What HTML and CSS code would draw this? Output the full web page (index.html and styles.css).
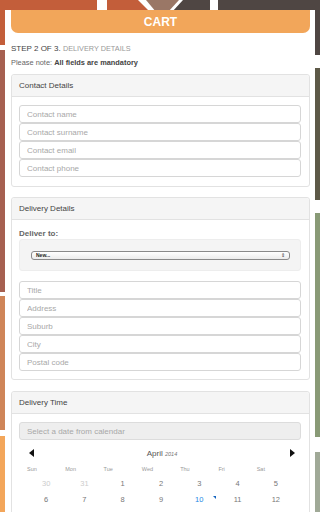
FILE: index.html
```html
<!DOCTYPE html>
<html>
<head>
<meta charset="utf-8">
<link rel="stylesheet" href="styles.css">
</head>
<body>
<svg class="backdrop" width="320" height="512" viewBox="0 0 320 512" aria-hidden="true">
  <rect x="0" y="0" width="97" height="45" fill="#c35e3a"/>
  <polygon points="107,0 138,0 150,12 107,12" fill="#c35e3a"/>
  <polygon points="146,0 179,0 168,12 156,12" fill="#9a7766"/>
  <polygon points="183,0 210,0 210,12 172,12" fill="#4f4643"/>
  <rect x="218" y="0" width="102" height="55" fill="#4f4643"/>
  <rect x="0" y="50" width="60" height="242" fill="#a66050"/>
  <rect x="0" y="296" width="60" height="134" fill="#cf8558"/>
  <rect x="0" y="436" width="60" height="76" fill="#f3a65a"/>
  <rect x="260" y="68" width="60" height="132" fill="#5d5948"/>
  <rect x="260" y="213" width="60" height="224" fill="#899a76"/>
  <rect x="260" y="452" width="60" height="60" fill="#a0a997"/>
</svg>

<main class="card">
  <header class="cart-header">CART</header>
  <p class="step">STEP 2 OF 3. <span class="step-sub">DELIVERY DETAILS</span></p>
  <p class="note">Please note: <b>All fields are mandatory</b></p>

  <section class="panel">
    <div class="panel-heading">Contact Details</div>
    <div class="panel-body">
      <input class="field" placeholder="Contact name">
      <input class="field" placeholder="Contact surname">
      <input class="field" placeholder="Contact email">
      <input class="field" placeholder="Contact phone">
    </div>
  </section>

  <section class="panel panel-delivery">
    <div class="panel-heading">Delivery Details</div>
    <div class="panel-body">
      <div class="label">Deliver to:</div>
      <div class="well">
        <div class="select"><span>New...</span><span class="select-arrow">&#8661;</span></div>
      </div>
      <div class="fields">
        <input class="field" placeholder="Title">
        <input class="field" placeholder="Address">
        <input class="field" placeholder="Suburb">
        <input class="field" placeholder="City">
        <input class="field" placeholder="Postal code">
      </div>
    </div>
  </section>

  <section class="panel panel-time">
    <div class="panel-heading">Delivery Time</div>
    <div class="panel-body">
      <input class="field field-readonly" placeholder="Select a date from calendar" readonly>
      <div class="calendar">
        <div class="cal-head">
          <span class="arrow arrow-left"></span>
          <span class="cal-title">April <i>2014</i></span>
          <span class="arrow arrow-right"></span>
        </div>
        <div class="cal-grid cal-days">
          <span>Sun</span><span>Mon</span><span>Tue</span><span>Wed</span><span>Thu</span><span>Fri</span><span>Sat</span>
        </div>
        <div class="cal-grid cal-dates">
          <span class="muted">30</span><span class="muted">31</span><span>1</span><span>2</span><span>3</span><span>4</span><span>5</span>
          <span>6</span><span>7</span><span>8</span><span>9</span><span class="today">10</span><span>11</span><span>12</span>
          <span>13</span><span>14</span><span>15</span><span>16</span><span>17</span><span>18</span><span>19</span>
        </div>
      </div>
    </div>
  </section>
</main>
</body>
</html>
```
FILE: styles.css
```css
* { box-sizing: border-box; }
html, body {
  margin: 0;
  padding: 0;
  width: 320px;
  height: 512px;
  overflow: hidden;
  background: #ffffff;
  font-family: "Liberation Sans", Arial, sans-serif;
  color: #444;
}
body { position: relative; }
.backdrop {
  position: absolute;
  left: 0;
  top: 0;
  z-index: 0;
}
.card {
  position: relative;
  z-index: 1;
  margin: 10px 5px 0 5px;
  padding: 0 5px 0 6px;
  background: #fff;
  min-height: 600px;
}
.cart-header {
  height: 23px;
  line-height: 24px;
  background: #f2a65a;
  border-radius: 0 0 7px 7px;
  color: #fff;
  font-weight: bold;
  font-size: 12px;
  text-align: center;
}
.step {
  margin: 10px 0 0 0;
  font-size: 8px;
  line-height: 12px;
  color: #444;
}
.step-sub {
  font-size: 7.3px;
  color: #999;
}
.note {
  margin: 3px 0 0 0;
  font-size: 7.4px;
  line-height: 10px;
  color: #666;
}
.note b { color: #444; }

.panel {
  margin-top: 6px;
  border: 1px solid #e2e2e2;
  border-radius: 3px;
  background: #fff;
}
.panel-delivery { margin-top: 10px; }
.panel-time { margin-top: 11px; }
.panel-heading {
  height: 22px;
  line-height: 22px;
  padding-left: 7px;
  background: #f5f5f5;
  border-bottom: 1px solid #e2e2e2;
  font-size: 8px;
  color: #444;
  border-radius: 3px 3px 0 0;
}
.panel-body {
  padding: 8px 8px 9px 7px;
}
.panel-delivery .panel-body { padding: 9px 8px 8px 7px; }

.field {
  display: block;
  width: 100%;
  height: 18px;
  margin: 0;
  padding: 0 7px;
  border: 1px solid #d6d6d6;
  border-radius: 3px;
  background: #fff;
  font-family: "Liberation Sans", Arial, sans-serif;
  font-size: 8px;
  color: #555;
  outline: none;
}
.field::placeholder { color: #a8a8a8; }
.field-readonly {
  background: #eeeeee;
  border-color: #dcdcdc;
}

.label {
  font-size: 8px;
  line-height: 10px;
  font-weight: bold;
  color: #666;
}
.well {
  height: 32px;
  padding: 12px 10px 0 11px;
  background: #f4f4f4;
  border: 1px solid #ededed;
  border-radius: 3px;
}
.select {
  display: flex;
  align-items: center;
  justify-content: space-between;
  height: 9px;
  padding: 0 4px 0 4px;
  margin-top: -1px;
  border: 1px solid #8a8a8a;
  border-radius: 3px;
  background: linear-gradient(#ffffff, #ececec);
  font-size: 5px;
  font-weight: bold;
  color: #222;
  line-height: 7px;
}
.select-arrow {
  font-size: 5px;
  font-weight: normal;
  color: #333;
}
.fields { margin-top: 10px; }

.calendar {
  margin: 4px 6px 0 8px;
}
.cal-head {
  display: flex;
  align-items: center;
  justify-content: space-between;
  height: 18px;
  padding: 0 0 0 2px;
}
.arrow {
  width: 0;
  height: 0;
  border-top: 4px solid transparent;
  border-bottom: 4px solid transparent;
}
.arrow-left { border-right: 5px solid #111; }
.arrow-right { border-left: 5px solid #111; }
.cal-title {
  font-size: 8px;
  color: #555;
}
.cal-title i {
  font-size: 5.5px;
  color: #777;
}
.cal-grid {
  display: grid;
  grid-template-columns: repeat(7, 1fr);
}
.cal-days span {
  height: 14px;
  line-height: 14px;
  font-size: 5.5px;
  color: #999;
}
.cal-dates span {
  position: relative;
  height: 16px;
  line-height: 16px;
  font-size: 7.5px;
  text-align: center;
  color: #777;
}
.cal-dates .muted { color: #cccccc; }
.cal-dates .today { color: #1e88e5; }
.cal-dates .today::after {
  content: "";
  position: absolute;
  right: 2px;
  top: 4px;
  width: 0;
  height: 0;
  border-top: 3px solid #1565c0;
  border-left: 3px solid transparent;
}
```
